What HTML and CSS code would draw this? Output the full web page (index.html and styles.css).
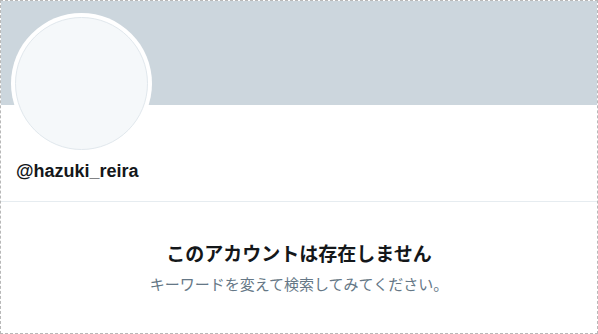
FILE: index.html
```html
<!DOCTYPE html>
<html lang="ja">
<head>
    <meta charset="UTF-8">
    <meta name="viewport" content="width=device-width, initial-scale=1.0">
    <title>@hazuki_reira</title>
    <link rel="stylesheet" href="styles.css">
</head>
<body>
    <div class="frame">
        <div class="banner"></div>
        <div class="profile">
            <div class="avatar">
                <div class="avatar-inner"></div>
            </div>
            <p class="screen-name">@hazuki_reira</p>
        </div>
        <div class="empty-state">
            <h1 class="empty-title">このアカウントは存在しません</h1>
            <p class="empty-text">キーワードを変えて検索してみてください。</p>
        </div>
    </div>
</body>
</html>
```

FILE: styles.css
```css
body {
    margin: 0;
    padding: 0;
    background-color: #fff;
    font-family: "Liberation Sans", "Noto Sans CJK JP", sans-serif;
}

.frame {
    width: 598px;
    height: 334px;
    box-sizing: border-box;
    border: 1px dashed #b8b8b8;
    overflow: hidden;
}

.banner {
    height: 104px;
    background-color: #ccd6dd;
}

.profile {
    display: flex;
    flex-direction: column;
    padding: 0 15px;
    height: 96px;
    border-bottom: 1px solid #e6ecf0;
}

.avatar {
    flex-shrink: 0;
    width: 141px;
    height: 141px;
    margin: -92px 0 0 -5px;
    padding: 4px;
    box-sizing: border-box;
    background-color: #fff;
    border-radius: 50%;
}

.avatar-inner {
    width: 100%;
    height: 100%;
    box-sizing: border-box;
    border: 1px solid #e1e8ed;
    border-radius: 50%;
    background-color: #f5f8fa;
}

.screen-name {
    margin: 5px 0 0;
    font-size: 18px;
    line-height: 24px;
    font-weight: 700;
    color: #14171a;
}

.empty-state {
    padding-top: 38px;
    text-align: center;
    font-family: "Noto Sans CJK JP", sans-serif;
}

.empty-title {
    margin: 0;
    font-size: 19px;
    line-height: 26px;
    font-weight: 700;
    color: #14171a;
}

.empty-text {
    margin: 8px 0 0;
    font-size: 15px;
    line-height: 20px;
    color: #657786;
}
```
